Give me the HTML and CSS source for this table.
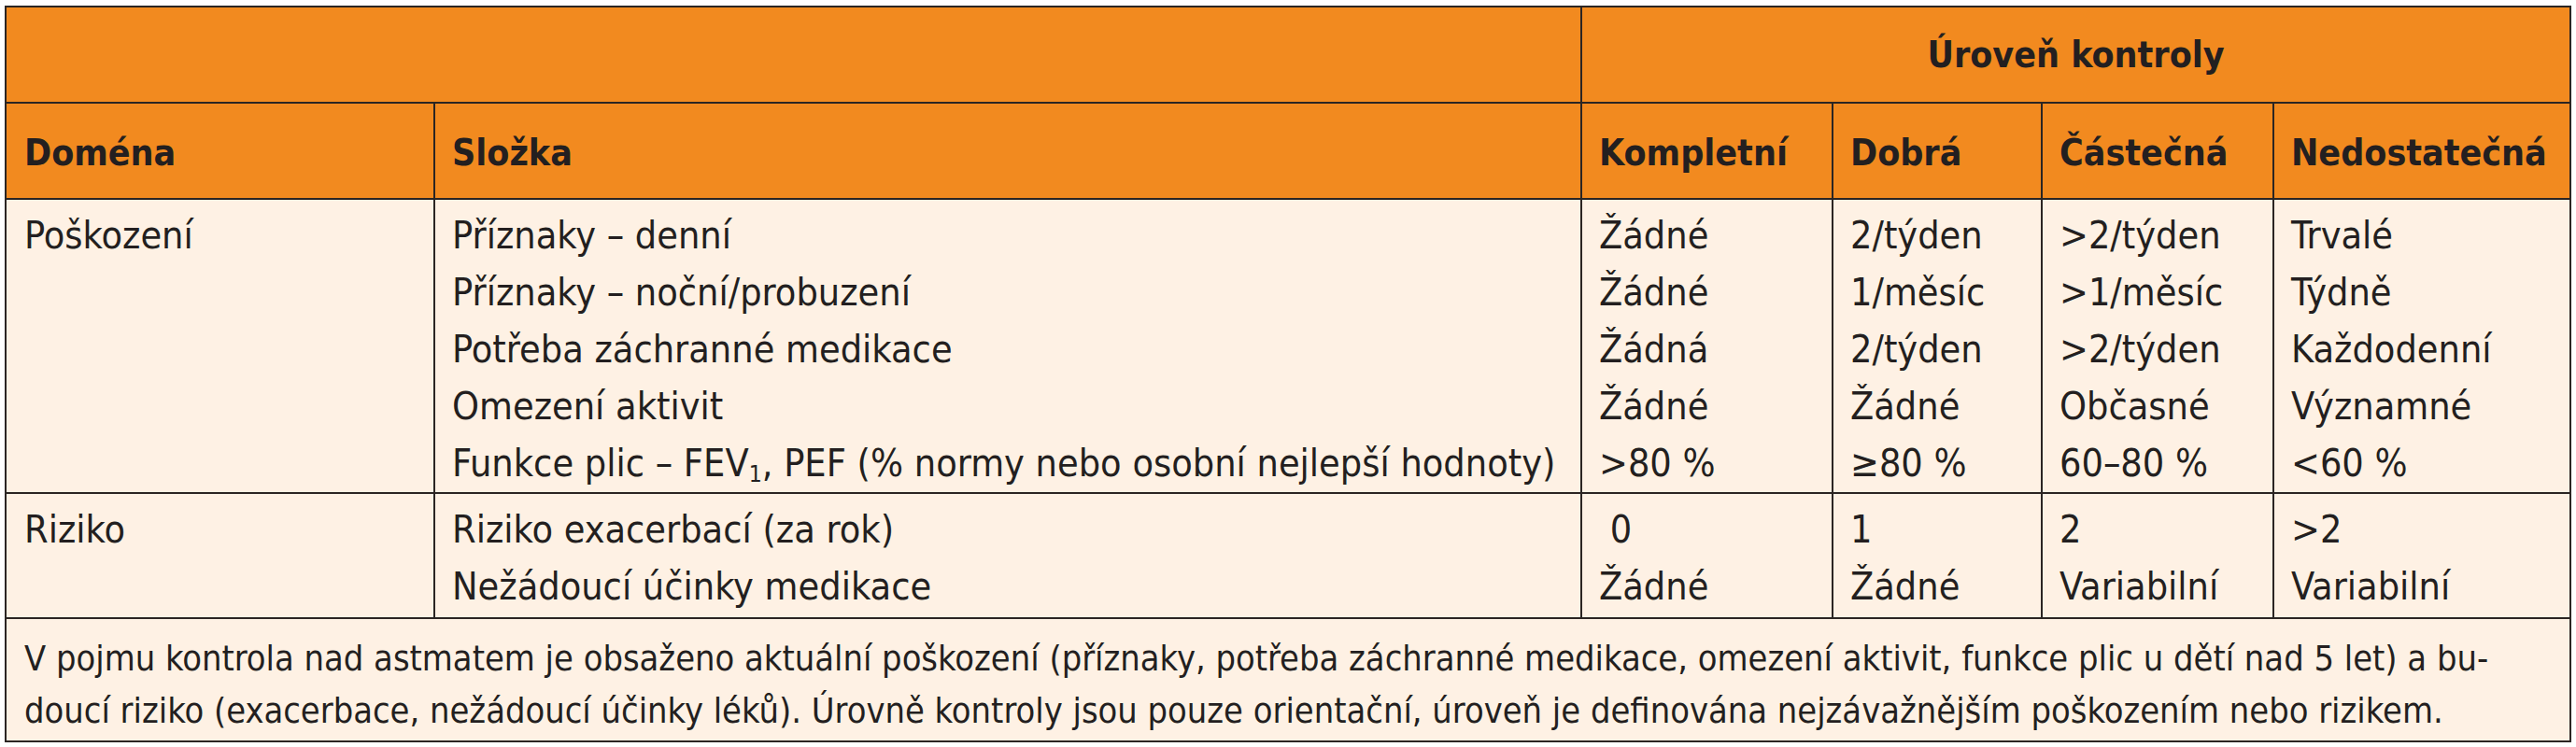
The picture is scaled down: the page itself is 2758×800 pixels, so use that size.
FILE: index.html
```html
<!DOCTYPE html>
<html lang="cs">
<head>
<meta charset="utf-8">
<title>Úroveň kontroly astmatu</title>
<link rel="stylesheet" href="styles.css">
</head>
<body>
<table class="tbl">
  <colgroup>
    <col class="c-dom">
    <col class="c-slo">
    <col class="c-kom">
    <col class="c-dob">
    <col class="c-cas">
    <col class="c-ned">
  </colgroup>
  <thead>
    <tr class="hrow hrow1">
      <th colspan="2"></th>
      <th colspan="4" class="center">Úroveň kontroly</th>
    </tr>
    <tr class="hrow hrow2">
      <th class="first">Doména</th>
      <th>Složka</th>
      <th>Kompletní</th>
      <th>Dobrá</th>
      <th>Částečná</th>
      <th>Nedostatečná</th>
    </tr>
  </thead>
  <tbody>
    <tr class="grp">
      <td class="first">Poškození</td>
      <td>Příznaky – denní<br>Příznaky – noční/probuzení<br>Potřeba záchranné medikace<br>Omezení aktivit<br>Funkce plic – FEV<sub>1</sub>, PEF (% normy nebo osobní nejlepší hodnoty)</td>
      <td>Žádné<br>Žádné<br>Žádná<br>Žádné<br>&gt;80 %</td>
      <td>2/týden<br>1/měsíc<br>2/týden<br>Žádné<br>≥80 %</td>
      <td>&gt;2/týden<br>&gt;1/měsíc<br>&gt;2/týden<br>Občasné<br>60–80 %</td>
      <td>Trvalé<br>Týdně<br>Každodenní<br>Významné<br>&lt;60 %</td>
    </tr>
    <tr class="grp grp2">
      <td class="first">Riziko</td>
      <td>Riziko exacerbací (za rok)<br>Nežádoucí účinky medikace</td>
      <td>&nbsp;0<br>Žádné</td>
      <td>1<br>Žádné</td>
      <td>2<br>Variabilní</td>
      <td>&gt;2<br>Variabilní</td>
    </tr>
    <tr class="note">
      <td colspan="6" class="first">V pojmu kontrola nad astmatem je obsaženo aktuální poškození (příznaky, potřeba záchranné medikace, omezení aktivit, funkce plic u dětí nad 5 let) a bu-<br>doucí riziko (exacerbace, nežádoucí účinky léků). Úrovně kontroly jsou pouze orientační, úroveň je definována nejzávažnějším poškozením nebo rizikem.</td>
    </tr>
  </tbody>
</table>
</body>
</html>
```

FILE: styles.css
```css
html, body {
  margin: 0;
  padding: 0;
  background: #ffffff;
}

body {
  font-family: "DejaVu Sans Condensed", "DejaVu Sans", sans-serif;
  color: #231f20;
}

.tbl {
  border-collapse: collapse;
  table-layout: fixed;
  width: 2746px;
  margin: 6px 0 0 5px;
  font-size: 41px;
  line-height: 61px;
}

.c-dom { width: 459px; }
.c-slo { width: 1228px; }
.c-kom { width: 269px; }
.c-dob { width: 224px; }
.c-cas { width: 248px; }
.c-ned { width: 318px; }

.tbl th,
.tbl td {
  border: 2px solid #2b2523;
  padding: 0 18px;
  text-align: left;
  white-space: nowrap;
}

.tbl .first {
  padding-left: 19px;
}

.hrow {
  height: 103px;
}

.hrow th {
  background: #f28a1f;
  font-weight: bold;
  font-size: 39px;
  vertical-align: middle;
}

.hrow2 th {
  padding-top: 4px;
}

.hrow th.center {
  text-align: center;
}

.grp td {
  background: #fef1e4;
  vertical-align: top;
  padding-top: 8px;
  padding-bottom: 0;
}

.grp2 td {
  padding-bottom: 2px;
}

.tbl sub {
  font-size: 0.6em;
  line-height: 0;
  vertical-align: -0.25em;
}

.note td {
  background: #fef1e4;
  font-size: 37.7px;
  line-height: 56px;
  padding-top: 14px;
  padding-bottom: 4px;
}
```
